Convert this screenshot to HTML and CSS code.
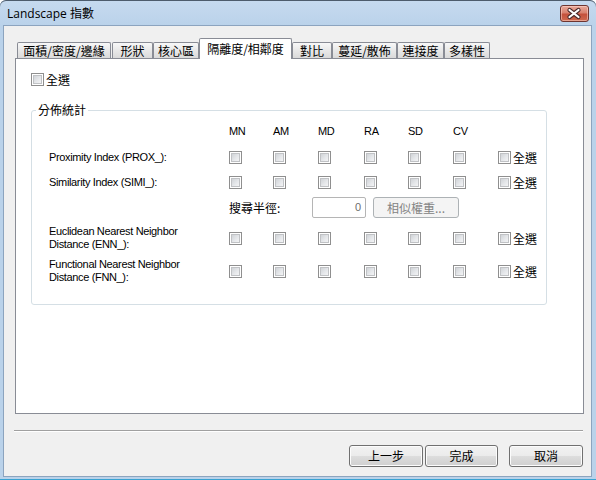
FILE: index.html
```html
<!DOCTYPE html>
<html>
<head>
<meta charset="utf-8">
<link rel="stylesheet" href="styles.css">
</head>
<body>
<div class="window">
  <div class="titlebar">
    <span class="title">Landscape 指數</span>
    <div class="close">
      <svg width="29" height="17" viewBox="0 0 29 17">
        <path d="M9.5 5 L18.5 12 M18.5 5 L9.5 12" stroke="#4a2a2a" stroke-width="4.2" stroke-linecap="round" fill="none"/>
        <path d="M9.5 5 L18.5 12 M18.5 5 L9.5 12" stroke="#ffffff" stroke-width="2.2" stroke-linecap="round" fill="none"/>
      </svg>
    </div>
  </div>
  <div class="client">
    <div class="tabs">
      <div class="tab t1">面積/密度/邊緣</div>
      <div class="tab t2">形狀</div>
      <div class="tab t3">核心區</div>
      <div class="tab sel">隔離度/相鄰度</div>
      <div class="tab t5">對比</div>
      <div class="tab t6">蔓延/散佈</div>
      <div class="tab t7">連接度</div>
      <div class="tab t8">多樣性</div>
    </div>
    <div class="panel">
      <div class="check-line"><span class="cb"></span><span class="cjk gap">全選</span></div>
      <fieldset class="group">
        <legend class="cjk">分佈統計</legend>
        <div class="grid">
          <div></div>
          <div class="hd">MN</div><div class="hd">AM</div><div class="hd">MD</div>
          <div class="hd">RA</div><div class="hd">SD</div><div class="hd">CV</div>
          <div></div>

          <div class="lbl">Proximity Index (PROX_):</div>
          <div class="cell"><span class="cb"></span></div>
          <div class="cell"><span class="cb"></span></div>
          <div class="cell"><span class="cb"></span></div>
          <div class="cell"><span class="cb"></span></div>
          <div class="cell"><span class="cb"></span></div>
          <div class="cell"><span class="cb"></span></div>
          <div class="all"><span class="cb"></span><span class="cjk gap">全選</span></div>

          <div class="lbl">Similarity Index (SIMI_):</div>
          <div class="cell"><span class="cb"></span></div>
          <div class="cell"><span class="cb"></span></div>
          <div class="cell"><span class="cb"></span></div>
          <div class="cell"><span class="cb"></span></div>
          <div class="cell"><span class="cb"></span></div>
          <div class="cell"><span class="cb"></span></div>
          <div class="all"><span class="cb"></span><span class="cjk gap">全選</span></div>

          <div></div>
          <div class="search">
            <span class="cjk search-lbl">搜尋半徑:</span>
            <div class="textbox">0</div>
            <div class="btn-dis cjk">相似權重...</div>
          </div>

          <div class="lbl two">Euclidean Nearest Neighbor<br>Distance (ENN_):</div>
          <div class="cell"><span class="cb"></span></div>
          <div class="cell"><span class="cb"></span></div>
          <div class="cell"><span class="cb"></span></div>
          <div class="cell"><span class="cb"></span></div>
          <div class="cell"><span class="cb"></span></div>
          <div class="cell"><span class="cb"></span></div>
          <div class="all"><span class="cb"></span><span class="cjk gap">全選</span></div>

          <div class="lbl two">Functional Nearest Neighbor<br>Distance (FNN_):</div>
          <div class="cell"><span class="cb"></span></div>
          <div class="cell"><span class="cb"></span></div>
          <div class="cell"><span class="cb"></span></div>
          <div class="cell"><span class="cb"></span></div>
          <div class="cell"><span class="cb"></span></div>
          <div class="cell"><span class="cb"></span></div>
          <div class="all"><span class="cb"></span><span class="cjk gap">全選</span></div>
        </div>
      </fieldset>
    </div>
    <div class="sep"></div>
    <div class="buttons">
      <div class="btn b-prev cjk">上一步</div>
      <div class="btn b-done cjk">完成</div>
      <div class="btn b-cancel cjk">取消</div>
    </div>
  </div>
</div>
</body>
</html>
```
FILE: styles.css
```css
html, body {
  margin: 0;
  padding: 0;
}
body {
  width: 596px;
  height: 480px;
  overflow: hidden;
  background: #ffffff;
  font-family: "Liberation Sans", "Noto Sans CJK TC", sans-serif;
  font-size: 11px;
  color: #000;
}
.cjk {
  font-family: "Noto Sans CJK TC", "Liberation Sans", sans-serif;
  font-size: 12px;
  letter-spacing: 0;
}
.window {
  width: 596px;
  height: 480px;
  box-sizing: border-box;
  padding: 0 4px 3px 3px;
  display: flex;
  flex-direction: column;
  background: linear-gradient(#c6daef 0px, #bad2ea 26px, #bad2ea 100%);
  border-radius: 6px 6px 0 0;
  box-shadow: inset 0 1px 0 #4d5c6c, inset 0 -1px 0 #3aa3d2;
}
.titlebar {
  height: 25px;
  flex: none;
  display: flex;
  align-items: flex-start;
  justify-content: space-between;
}
.title {
  font-family: "Open Sans", "Noto Sans CJK TC", sans-serif;
  font-size: 12px;
  line-height: 16px;
  margin-top: 6px;
  margin-left: 4px;
  color: #000;
}
.close {
  width: 29px;
  height: 17px;
  margin-top: 5px;
  margin-right: 3px;
  box-sizing: border-box;
  border: 1px solid #6e3530;
  border-radius: 3px;
  background: linear-gradient(#e9a99b 0%, #d8826f 45%, #c4513c 55%, #cf6a4f 100%);
  box-shadow: inset 0 0 0 1px rgba(255,220,210,0.5);
  overflow: hidden;
}
.close svg {
  display: block;
  margin: -1px 0 0 -1px;
}
.client {
  flex: 1;
  background: #f0f0f0;
  border: 1px solid #8ca4bf;
  display: flex;
  flex-direction: column;
}
.tabs {
  flex: none;
  display: flex;
  align-items: flex-end;
  height: 20px;
  margin-top: 12px;
  padding-left: 13px;
  position: relative;
  z-index: 1;
}
.tab {
  box-sizing: border-box;
  height: 16px;
  border: 1px solid #898c95;
  border-bottom: 0;
  background: linear-gradient(#f8f8f8, #e8e8e8 50%, #dadada);
  font-family: "Noto Sans CJK TC", sans-serif;
  font-size: 12px;
  line-height: 15px;
  text-align: center;
  white-space: nowrap;
  border-radius: 2px 2px 0 0;
}
.t1 { width: 94px; margin-right: 1px; }
.t2 { width: 41px; }
.t3 { width: 46px; }
.sel {
  width: 93px;
  height: 21px;
  margin-bottom: -1px;
  background: #ffffff;
  padding-top: 2px;
}
.t5 { width: 40px; }
.t6 { width: 65px; }
.t7 { width: 47px; }
.t8 { width: 46px; }

.panel {
  flex: none;
  box-sizing: border-box;
  height: 356px;
  margin: 0 7px 0 11px;
  border: 1px solid #898c95;
  background: #ffffff;
  padding: 14px 0 0 15px;
}
.check-line {
  display: flex;
  align-items: center;
  height: 13px;
  line-height: 13px;
}
.cb {
  display: inline-block;
  flex: none;
  width: 13px;
  height: 13px;
  box-sizing: border-box;
  border: 1px solid #8f8f8f;
  background: linear-gradient(135deg, #c6cace 0%, #e6e8eb 55%, #fbfbfb 100%);
  box-shadow: inset 0 0 0 1px #ffffff, inset 0 0 0 2px #c0c2c5;
}
.gap {
  margin-left: 2px;
  line-height: 13px;
}
.group {
  box-sizing: border-box;
  width: 516px;
  margin: 17px 0 0 0;
  padding: 2px 0 18px 4px;
  border: 1px solid #d5dfe5;
  border-radius: 3px;
  min-width: 0;
}
.group legend {
  padding: 0 2px;
  line-height: 14px;
  height: 14px;
}
.grid {
  margin-left: 13px;
  display: grid;
  grid-template-columns: 180px 44px 45px 46px 44px 45px 45px auto;
  grid-template-rows: 25px 26px 25px 25px 36px 30px;
  align-items: center;
}
.hd {
  line-height: 13px;
  letter-spacing: -0.3px;
}
.lbl {
  line-height: 13px;
  white-space: nowrap;
  letter-spacing: -0.35px;
}
.cell {
  display: flex;
  align-items: center;
}
.all {
  display: flex;
  align-items: center;
}
.search {
  grid-column: 2 / -1;
  display: flex;
  align-items: center;
}
.search-lbl {
  width: 83px;
  line-height: 14px;
}
.textbox {
  box-sizing: border-box;
  width: 54px;
  height: 21px;
  border: 1px solid #b5b5b5;
  border-radius: 2px;
  background: #ffffff;
  color: #6d6d6d;
  text-align: right;
  padding-right: 4px;
  line-height: 19px;
}
.btn-dis {
  box-sizing: border-box;
  width: 86px;
  height: 21px;
  margin-left: 7px;
  border: 1px solid #adb2b5;
  border-radius: 3px;
  background: #f4f4f4;
  color: #838383;
  text-align: center;
  line-height: 19px;
}
.sep {
  flex: none;
  height: 1px;
  width: 569px;
  margin: 16px 0 0 10px;
  background: #a0a0a0;
  border-bottom: 1px solid #ffffff;
}
.buttons {
  flex: none;
  display: flex;
  justify-content: flex-end;
  margin: 13px 8px 0 0;
}
.btn {
  box-sizing: border-box;
  height: 22px;
  border: 1px solid #707070;
  border-radius: 3px;
  background: linear-gradient(#f2f2f2 0%, #ebebeb 50%, #dddddd 51%, #cfcfcf 100%);
  box-shadow: inset 0 0 0 1px #fcfcfc;
  text-align: center;
  line-height: 20px;
}
.b-prev { width: 74px; margin-right: 2px; }
.b-done { width: 73px; margin-right: 11px; }
.b-cancel { width: 74px; }
```
